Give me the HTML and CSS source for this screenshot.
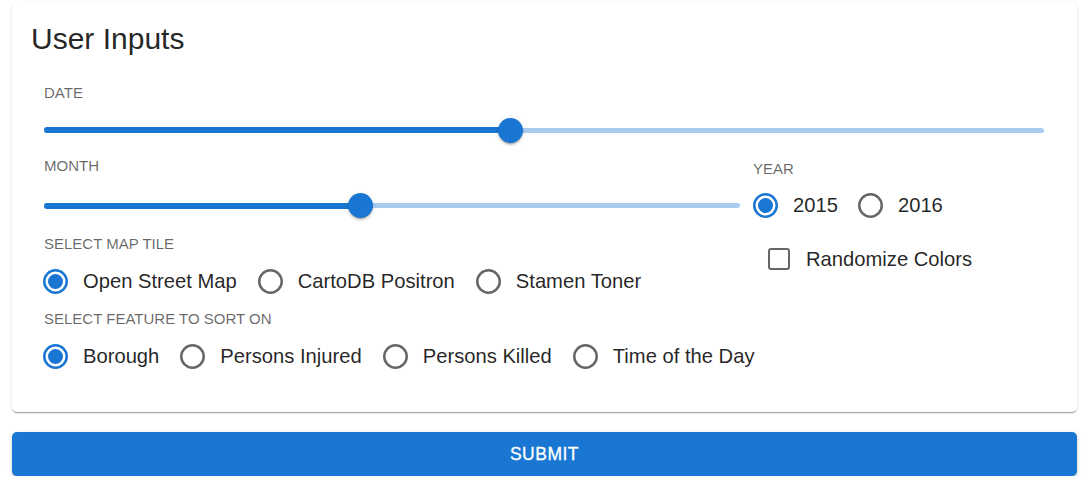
FILE: index.html
```html
<!DOCTYPE html>
<html lang="en">
<head>
<meta charset="utf-8">
<title>User Inputs</title>
<link rel="stylesheet" href="styles.css">
</head>
<body>
<div class="page">
  <section class="card">
    <h2 class="title">User Inputs</h2>
    <div class="content">
      <div class="label label-date">DATE</div>
      <div class="slider slider-date">
        <div class="rail"></div>
        <div class="track" style="width: 46.65%"></div>
        <div class="thumb" style="left: 46.65%"></div>
      </div>
      <div class="cols">
        <div class="col-left">
          <div class="label label-month">MONTH</div>
          <div class="slider slider-month">
            <div class="rail"></div>
            <div class="track" style="width: 45.47%"></div>
            <div class="thumb" style="left: 45.47%"></div>
          </div>
          <div class="label label-tile">SELECT MAP TILE</div>
          <div class="radio-row row-left">
            <label class="option">
              <svg class="radio checked" viewBox="0 0 25 25"><circle cx="12.5" cy="12.5" r="11.25"/><circle class="dot" cx="12.5" cy="12.5" r="6.25"/></svg>
              <span>Open Street Map</span>
            </label>
            <label class="option">
              <svg class="radio" viewBox="0 0 25 25"><circle cx="12.5" cy="12.5" r="11.25"/></svg>
              <span>CartoDB Positron</span>
            </label>
            <label class="option">
              <svg class="radio" viewBox="0 0 25 25"><circle cx="12.5" cy="12.5" r="11.25"/></svg>
              <span>Stamen Toner</span>
            </label>
          </div>
          <div class="label label-feature">SELECT FEATURE TO SORT ON</div>
          <div class="radio-row row-left row-feature">
            <label class="option">
              <svg class="radio checked" viewBox="0 0 25 25"><circle cx="12.5" cy="12.5" r="11.25"/><circle class="dot" cx="12.5" cy="12.5" r="6.25"/></svg>
              <span>Borough</span>
            </label>
            <label class="option">
              <svg class="radio" viewBox="0 0 25 25"><circle cx="12.5" cy="12.5" r="11.25"/></svg>
              <span>Persons Injured</span>
            </label>
            <label class="option">
              <svg class="radio" viewBox="0 0 25 25"><circle cx="12.5" cy="12.5" r="11.25"/></svg>
              <span>Persons Killed</span>
            </label>
            <label class="option">
              <svg class="radio" viewBox="0 0 25 25"><circle cx="12.5" cy="12.5" r="11.25"/></svg>
              <span>Time of the Day</span>
            </label>
          </div>
        </div>
        <div class="col-right">
          <div class="label label-year">YEAR</div>
          <div class="radio-row row-year">
            <label class="option">
              <svg class="radio checked" viewBox="0 0 25 25"><circle cx="12.5" cy="12.5" r="11.25"/><circle class="dot" cx="12.5" cy="12.5" r="6.25"/></svg>
              <span>2015</span>
            </label>
            <label class="option">
              <svg class="radio" viewBox="0 0 25 25"><circle cx="12.5" cy="12.5" r="11.25"/></svg>
              <span>2016</span>
            </label>
          </div>
          <label class="check-row">
            <span class="checkbox"></span>
            <span>Randomize Colors</span>
          </label>
        </div>
      </div>
    </div>
  </section>
  <button class="submit" type="button">SUBMIT</button>
</div>
</body>
</html>
```
FILE: styles.css
```css
* { box-sizing: border-box; }

html, body {
  margin: 0;
  padding: 0;
  background: #ffffff;
}

body {
  font-family: "Liberation Sans", Arial, Helvetica, sans-serif;
  color: rgba(0, 0, 0, 0.87);
}

.page {
  padding: 2px 11px 0 12px;
}

.card {
  background: #fff;
  border-radius: 5px;
  box-shadow: 0 2px 1px -1px rgba(0,0,0,0.2), 0 1px 1px 0 rgba(0,0,0,0.14), 0 1px 3px 0 rgba(0,0,0,0.12);
  padding: 22px 21px 36px 20px;
}

.title {
  margin: 0 0 0 -1px;
  font-weight: 400;
  font-size: 30px;
  line-height: 30px;
  height: 30px;
  color: rgba(0, 0, 0, 0.87);
}

.content {
  padding: 0 12px;
}

.label {
  font-size: 15px;
  line-height: 20px;
  height: 20px;
  color: rgba(0, 0, 0, 0.6);
  white-space: nowrap;
}

.label-date { margin-top: 29px; }
.label-month { margin-top: 9px; }
.label-tile { margin-top: 11px; }
.label-feature { margin-top: 7.5px; }
.label-year { margin-top: 12px; }

.slider {
  position: relative;
  height: 34px;
}
.slider-date { margin-top: 10px; }
.slider-month { margin-top: 12.5px; }

.rail {
  position: absolute;
  left: 0;
  right: 0;
  top: 14.5px;
  height: 5px;
  border-radius: 3px;
  background: #a8cbee;
}

.track {
  position: absolute;
  left: 0;
  top: 14px;
  height: 6px;
  border-radius: 3px;
  background: #1976d2;
}

.thumb {
  position: absolute;
  top: 4.5px;
  width: 25px;
  height: 25px;
  margin-left: -12.5px;
  border-radius: 50%;
  background: #1976d2;
  box-shadow: 0 3px 1px -2px rgba(0,0,0,0.2), 0 2px 2px 0 rgba(0,0,0,0.14), 0 1px 5px 0 rgba(0,0,0,0.12);
}

.cols {
  display: grid;
  grid-template-columns: 696px 1fr;
  column-gap: 13px;
}

.radio-row {
  display: flex;
  align-items: center;
  height: 40px;
  white-space: nowrap;
}

.row-left {
  margin-top: 7.5px;
  margin-left: -1px;
}

.row-year {
  margin-top: 6px;
}

.option {
  display: inline-flex;
  align-items: center;
  gap: 15px;
  margin-right: 21px;
  font-size: 20.2px;
  line-height: 24px;
  color: rgba(0, 0, 0, 0.87);
}
.row-year .option { margin-right: 20px; }

.radio {
  width: 25px;
  height: 25px;
  flex: none;
  display: block;
}
.radio circle {
  fill: none;
  stroke: rgba(0, 0, 0, 0.6);
  stroke-width: 2.5;
}
.radio.checked circle {
  stroke: #1976d2;
}
.radio .dot {
  fill: #1976d2;
  stroke: none;
}

.check-row {
  display: flex;
  align-items: center;
  gap: 16px;
  height: 40px;
  margin-top: 14px;
  padding-left: 15px;
  font-size: 20.2px;
  line-height: 24px;
  color: rgba(0, 0, 0, 0.87);
  white-space: nowrap;
}

.checkbox {
  width: 22px;
  height: 22px;
  flex: none;
  border: 2.5px solid rgba(0, 0, 0, 0.6);
  border-radius: 3px;
}

.submit {
  display: block;
  width: 100%;
  height: 44px;
  margin-top: 20px;
  border: 0;
  border-radius: 5px;
  background: #1976d2;
  color: #fff;
  font-family: "Liberation Sans", Arial, Helvetica, sans-serif;
  font-size: 17.5px;
  font-weight: 500;
  letter-spacing: 0.5px;
  -webkit-text-stroke: 0.3px #fff;
  box-shadow: 0 3px 1px -2px rgba(0,0,0,0.2), 0 2px 2px 0 rgba(0,0,0,0.14), 0 1px 5px 0 rgba(0,0,0,0.12);
  padding: 0;
}
```
